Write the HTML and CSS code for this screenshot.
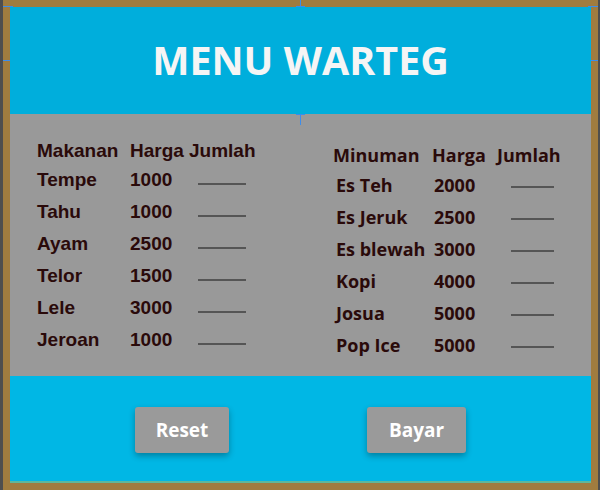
FILE: index.html
```html
<!DOCTYPE html>
<html lang="id">
<head>
  <meta charset="UTF-8" />
  <title>Menu Warteg</title>
  <link rel="stylesheet" href="styles.css">
</head>
<body>
  <div class="frame">
    <div class="header">
      <h1>MENU WARTEG</h1>
    </div>

    <div class="content">
      <div class="table makanan">
        <div class="row head">
          <span>Makanan</span><span>Harga</span><span>Jumlah</span>
        </div>
        <div class="row"><span>Tempe</span><span>1000</span><span class="qty"></span></div>
        <div class="row"><span>Tahu</span><span>1000</span><span class="qty"></span></div>
        <div class="row"><span>Ayam</span><span>2500</span><span class="qty"></span></div>
        <div class="row"><span>Telor</span><span>1500</span><span class="qty"></span></div>
        <div class="row"><span>Lele</span><span>3000</span><span class="qty"></span></div>
        <div class="row"><span>Jeroan</span><span>1000</span><span class="qty"></span></div>
      </div>

      <div class="table minuman">
        <div class="row head">
          <span>Minuman</span><span>Harga</span><span>Jumlah</span>
        </div>
        <div class="row"><span>Es Teh</span><span>2000</span><span class="qty"></span></div>
        <div class="row"><span>Es Jeruk</span><span>2500</span><span class="qty"></span></div>
        <div class="row"><span>Es blewah</span><span>3000</span><span class="qty"></span></div>
        <div class="row"><span>Kopi</span><span>4000</span><span class="qty"></span></div>
        <div class="row"><span>Josua</span><span>5000</span><span class="qty"></span></div>
        <div class="row"><span>Pop Ice</span><span>5000</span><span class="qty"></span></div>
      </div>
    </div>

    <div class="footer">
      <button class="btn reset">Reset</button>
      <button class="btn bayar">Bayar</button>
    </div>

    <!-- penanda seleksi editor -->
    <span class="mark corner-tl"></span>
    <span class="mark corner-tr"></span>
    <span class="mark top-mid"></span>
    <span class="mark top-bar"></span>
    <span class="mark side-l"></span>
    <span class="mark side-r"></span>
    <span class="mark split"></span>
    <span class="mark split-bar"></span>
  </div>
</body>
</html>
```

FILE: styles.css
```css
body {
  margin: 0;
  background: #4e4e4e;
  overflow: hidden;
}

.frame {
  position: relative;
  margin-left: 3px;
  width: 581px;
  height: 476px;
  border: 7px solid #a07c3f;
  display: flex;
  flex-direction: column;
}

.header {
  height: 107px;
  background: #00aedc;
  display: flex;
  align-items: center;
  justify-content: center;
}

h1 {
  margin: 0 0 2px 0;
  font-family: "Open Sans", sans-serif;
  font-weight: 700;
  font-size: 39.5px;
  color: #f5f5f5;
}

.content {
  height: 262px;
  background: #999999;
  display: grid;
  grid-template-columns: 296px 1fr;
  padding-left: 27px;
  box-sizing: border-box;
  color: #2a0a0a;
}

.table {
  font-weight: 700;
}

.row {
  display: grid;
  height: 32px;
  line-height: 32px;
  white-space: nowrap;
}

/* tabel kiri */
.makanan {
  font-family: "Liberation Sans", Arial, sans-serif;
  font-size: 19px;
  padding-top: 21px;
}
.makanan .row {
  grid-template-columns: 93px 59px 1fr;
}
.makanan .head {
  height: 29px;
}
.makanan .qty {
  display: block;
  width: 48px;
  height: 2px;
  margin: 19px 0 0 9px;
  background: #555;
}

/* tabel kanan */
.minuman {
  font-family: "Open Sans", sans-serif;
  font-size: 18px;
  padding-top: 25px;
}
.minuman .row {
  grid-template-columns: 98px 77px 1fr;
  padding-left: 3px;
}
.minuman .head {
  grid-template-columns: 99px 65px 1fr;
  height: 30px;
  padding-left: 0;
}
.minuman .qty {
  display: block;
  width: 43px;
  height: 2px;
  margin: 17px 0 0 0;
  background: #555;
}

.footer {
  flex: 1;
  background: #00b7e5;
  border-bottom: 2px solid #5fb89a;
  display: flex;
  justify-content: center;
  gap: 138px;
  padding-top: 31px;
  box-sizing: border-box;
}

.btn {
  height: 46px;
  border: none;
  border-radius: 3px;
  background: #9a9a9a;
  color: #fff;
  font-family: "Open Sans", sans-serif;
  font-weight: 700;
  font-size: 19px;
  box-shadow: 0 3px 6px rgba(0, 0, 0, 0.3);
}
.reset {
  width: 94px;
}
.bayar {
  width: 99px;
}

.mark {
  position: absolute;
  background: #3c8dec;
}
.corner-tl {
  left: -7px;
  top: -1px;
  width: 10px;
  height: 1px;
}
.corner-tr {
  right: -7px;
  top: -1px;
  width: 10px;
  height: 1px;
}
.top-mid {
  left: 290px;
  top: -7px;
  width: 1px;
  height: 7px;
}
.top-bar {
  left: 286px;
  top: -1px;
  width: 9px;
  height: 1px;
}
.side-l {
  left: -7px;
  top: 53px;
  width: 7px;
  height: 1px;
}
.side-r {
  right: -7px;
  top: 53px;
  width: 7px;
  height: 1px;
}
.split {
  left: 290px;
  top: 107px;
  width: 1px;
  height: 11px;
}
.split-bar {
  left: 286px;
  top: 107px;
  width: 9px;
  height: 1px;
}
```
